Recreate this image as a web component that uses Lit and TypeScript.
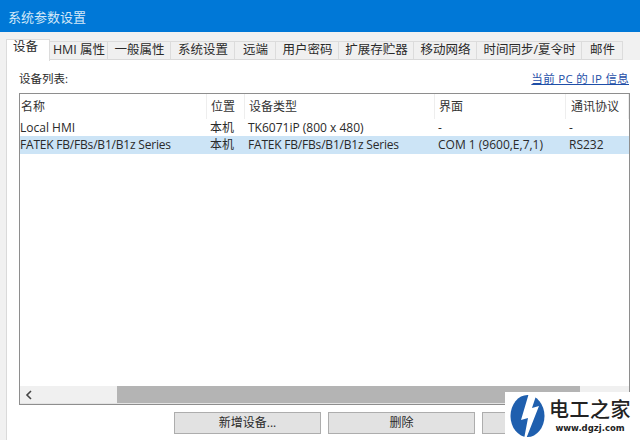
import { LitElement, html, css } from "lit";
import { customElement } from "lit/decorators.js";

const TABS: [string, number][] = [
  ["设备", 44], ["HMI 属性", 58], ["一般属性", 63], ["系统设置", 64], ["远端", 41], ["用户密码", 63],
  ["扩展存贮器", 75], ["移动网络", 63], ["时间同步/夏令时", 105], ["邮件", 41],
];
const COLS = ["名称", "位置", "设备类型", "界面", "通讯协议"];
const ROWS = [
  ["Local HMI", "本机", "TK6071iP (800 x 480)", "-", "-"],
  ["FATEK FB/FBs/B1/B1z Series", "本机", "FATEK FB/FBs/B1/B1z Series", "COM 1 (9600,E,7,1)", "RS232"],
];

@customElement("app-root")
export class AppRoot extends LitElement {
  static styles = css`
    :host { display: block; position: relative; width: 640px; height: 440px; overflow: hidden; background: #f1f1f1;
      font-family: "Open Sans", "Noto Sans CJK SC", sans-serif; font-size: 12.5px; color: #2a2a2a; }
    .title { height: 32px; background: #0078d7; color: #d3e8f8; font-size: 13px; display: flex; align-items: center; padding-left: 8px; box-sizing: border-box; }
    .tabs { display: flex; height: 20px; margin-top: 8px; padding-left: 6px; position: relative; z-index: 1; }
    .tab { box-sizing: border-box; display: flex; align-items: center; justify-content: center; white-space: nowrap; height: 19px; margin-top: 1px; background: #f0f0f0;
      border: 1px solid #dcdcdc; border-left: none; border-bottom: 1px solid #d9d9d9; font-size: 12.5px; line-height: 1; padding-bottom: 1px; padding-left: 1px; }
    .tab.active { background: #fff; height: 22px; margin-top: -1px; border: 1px solid #dcdcdc; border-bottom: none; font-size: 12.5px; padding: 0 5px 6px 0; }
    .panel { margin-left: 6px; height: 380px; background: #fff; border-left: 1px solid #dadada; padding: 9px 11px 0 12px; box-sizing: border-box; }
    .top { display: flex; justify-content: space-between; align-items: center; height: 17px; font-size: 11.5px; }
    .link { color: #1f4fa8; text-decoration: underline; font-size: 11.5px; letter-spacing: 0.3px; }
    .table { box-sizing: border-box; margin-top: 7px; height: 312px; width: 611px; border: 1px solid #8e8e8e; display: flex; flex-direction: column; }
    .row { display: grid; grid-template-columns: 187px 38px 190px 131px 1fr; align-items: center; line-height: 1; }
    .head { height: 25px; }
    .head span { box-sizing: border-box; height: 25px; display: flex; align-items: center; padding-left: 1px; border-right: 1px solid #eeeeee; font-size: 12px; color: #333; }
    .head span:nth-child(n+2) { padding-left: 4px; }
    .head span:nth-child(5) { padding-left: 5px; }
    .data { height: 17px; font-size: 12px; }
    .data span { white-space: nowrap; padding-left: 3px; padding-top: 1px; }
    .data span:first-child { padding-left: 0; }
    .data + .data { height: 18px; background: #cce4f6; }
    .data + .data span { padding-top: 0; }
    .data + .data span:nth-child(1), .data + .data span:nth-child(3) { letter-spacing: -0.2px; }
    .spacer { flex: 1; }
    .sb { height: 17px; display: flex; background: #f0f0f0; border-bottom: 1px solid #e4e4e4; }
    .arrow { width: 17px; display: flex; align-items: center; justify-content: center; }
    .thumb { margin-left: 80px; width: 463px; background: #b4b4b4; }
    .actions { display: flex; gap: 7px; margin-top: 7px; margin-left: 155px; }
    .btn { box-sizing: border-box; width: 147px; height: 22px; background: #e2e2e2; border: 1px solid #adadad; display: flex; align-items: center; justify-content: center; font-size: 12px; padding-bottom: 3px; }
    .wm { position: absolute; left: 505px; top: 392px; width: 135px; height: 48px; background: #fff; display: flex; align-items: center; }
    .wm svg { margin-left: 4px; flex: none; }
    .wm-text { display: flex; flex-direction: column; align-items: center; margin-left: 3px; }
    .cn { font-size: 20px; line-height: 24px; color: #222; font-weight: 500; letter-spacing: 0.5px; white-space: nowrap; }
    .url { font-family: "DejaVu Sans", sans-serif; font-size: 8.5px; line-height: 12px; font-weight: 700; color: #222; white-space: nowrap; }
  `;

  render() {
    return html`
      <div class="title">系统参数设置</div>
      <div class="tabs">
        ${TABS.map(([t, w], i) => html`<div class="tab ${i === 0 ? "active" : ""}" style="width:${w}px">${t}</div>`)}
      </div>
      <div class="panel">
        <div class="top"><span>设备列表:</span><span class="link">当前 PC 的 IP 信息</span></div>
        <div class="table">
          <div class="row head">${COLS.map((c) => html`<span>${c}</span>`)}</div>
          ${ROWS.map((r) => html`<div class="row data">${r.map((c) => html`<span>${c}</span>`)}</div>`)}
          <div class="spacer"></div>
          <div class="sb">
            <div class="arrow">
              <svg width="8" height="10" viewBox="0 0 8 10"><path d="M6 1 L2 5 L6 9" fill="none" stroke="#444" stroke-width="1.6"/></svg>
            </div>
            <div class="thumb"></div>
          </div>
        </div>
        <div class="actions">
          <div class="btn">新增设备...</div>
          <div class="btn">删除</div>
          <div class="btn"></div>
        </div>
      </div>
      <div class="wm">
        <svg width="37" height="44" viewBox="0 0 37 44">
          <ellipse cx="18.5" cy="22" rx="17" ry="21" fill="#1f5fae"/>
          <path d="M20 -1 L28 -1 L23 14 L30 12 L17 45 L15 45 L19 24 L12 26 Z" fill="#fff"/>
        </svg>
        <div class="wm-text">
          <div class="cn">电工之家</div>
          <div class="url">www.dgzj.com</div>
        </div>
      </div>
    `;
  }
}
